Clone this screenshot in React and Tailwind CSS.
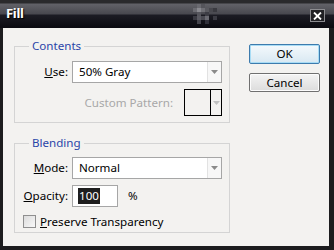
import React from "react";

const font = { fontFamily: '"Noto Sans", "Liberation Sans", sans-serif' };

function Arrow({ color = "#8a8a8a" }) {
  return (
    <svg width="7" height="4" viewBox="0 0 7 4">
      <path d="M0 0 H7 L3.5 4 Z" fill={color} />
    </svg>
  );
}

function Select({ value }) {
  return (
    <div className="flex h-[22px] w-[150px] border border-[#a6a6a6] bg-white">
      <div className="flex flex-1 items-center pl-[6px] text-[11.6px] text-black">{value}</div>
      <div className="flex w-[14px] items-center justify-center border-l border-[#e2e2e2] bg-[#f7f7f7]">
        <Arrow />
      </div>
    </div>
  );
}

function TitlePixels() {
  const sq = [
    [197, 4, "#6a6a70"],
    [201, 4, "#55555b"],
    [193, 8, "#6c6c72"],
    [197, 8, "#8a8a90"],
    [201, 8, "#707076"],
    [205, 8, "#5a5a60"],
    [209, 8, "#48484e"],
    [213, 8, "#3a3a40"],
    [197, 12, "#55555c"],
    [205, 12, "#3c3c44"],
    [193, 16, "#3a3a42"],
    [197, 16, "#5a5a62"],
    [201, 16, "#4a4a52"],
    [205, 16, "#6a6a72"],
    [213, 16, "#3a3a42"],
    [197, 20, "#44444c"],
    [205, 20, "#30303a"],
  ];
  return (
    <svg width="334" height="28" className="absolute left-0 top-0">
      {sq.map(([x, y, c], i) => (
        <rect key={i} x={x} y={y} width="4" height="4" fill={c} />
      ))}
    </svg>
  );
}

export default function App() {
  return (
    <div className="h-[250px] w-[334px] bg-[#1c1c1e] flex flex-col" style={font}>
      <div className="relative h-[28px] shrink-0 bg-[linear-gradient(to_bottom,#2a2a2c_0px,#2a2a2c_3px,#626268_4px,#48484f_14px,#1c1c24_15px,#0c0c12_27px)]">
        <TitlePixels />
        <div className="relative flex h-full items-center justify-between pl-[6px] pr-[9px]">
          <span className="text-[13px] font-bold text-white [text-shadow:1px_1px_1px_#000] tracking-[-0.3px]">Fill</span>
          <div className="flex h-[13px] w-[15px] items-center justify-center border border-[#8c8c90] bg-[#202024] mt-[3px]">
            <svg width="9" height="8" viewBox="0 0 9 8">
              <path d="M1 0.5 L8 7.5 M8 0.5 L1 7.5" stroke="#fff" strokeWidth="1.8" />
            </svg>
          </div>
        </div>
      </div>
      <div className="ml-[3px] mr-[5px] mb-[4px] flex flex-1 bg-[#f3f2f0] pl-[11px] pt-[10px]">
        <div className="flex w-[216px] flex-col gap-[12px]">
          <fieldset className="h-[85px] border border-[#d4d4d4] pl-[14px] pr-[7px] pt-[7px]">
            <legend className="px-[3px] text-[11.6px] leading-[16px] text-[#2a45a8]">Contents</legend>
            <div className="flex flex-col gap-[6px] -ml-[14px]">
              <div className="flex items-center">
                <span className="w-[57px] pr-[4px] text-right text-[11.6px] text-black">
                  <span className="underline">U</span>se:
                </span>
                <Select value="50% Gray" />
              </div>
              <div className="flex items-center">
                <span className="w-[169px] pr-[11px] text-right text-[11.6px] text-[#a8a8a8]">Custom Pattern:</span>
                <div className="flex h-[27px] w-[38px] border border-black bg-[#f3f2f0]">
                  <div className="flex-1 border-r border-black" />
                  <div className="flex w-[10px] items-center justify-center">
                    <Arrow color="#c0c0c0" />
                  </div>
                </div>
              </div>
            </div>
          </fieldset>
          <fieldset className="h-[98px] border border-[#d4d4d4] pl-[14px] pr-[7px] pt-[6px]">
            <legend className="px-[3px] text-[11.6px] leading-[16px] text-[#2a45a8]">Blending</legend>
            <div className="flex flex-col gap-[6px] -ml-[14px]">
              <div className="flex items-center">
                <span className="w-[57px] pr-[4px] text-right text-[11.6px] text-black">
                  <span className="underline">M</span>ode:
                </span>
                <Select value="Normal" />
              </div>
              <div className="flex items-center">
                <span className="w-[57px] pr-[4px] text-right text-[11.6px] text-black">
                  <span className="underline">O</span>pacity:
                </span>
                <div className="flex h-[22px] w-[46px] items-center border border-[#a6a6a6] bg-white pl-[5px]">
                  <span className="bg-[#1e1e1e] px-[1px] text-[11.6px] leading-[16px] text-white">100</span>
                </div>
                <span className="ml-[10px] text-[11.6px] text-black">%</span>
              </div>
              <div className="flex items-center pl-[8px]">
                <div className="h-[13px] w-[13px] border border-[#8f8f8f] bg-[linear-gradient(135deg,#dcdcdc,#f8f8f8)]" />
                <span className="ml-[4px] text-[11.6px] text-black">
                  <span className="underline">P</span>reserve Transparency
                </span>
              </div>
            </div>
          </fieldset>
        </div>
        <div className="ml-[19px] flex flex-col gap-[9px] pt-[6px]">
          <button className="h-[20px] w-[71px] rounded-[2px] border border-[#3d7bad] bg-[linear-gradient(to_bottom,#f4f9fc,#d8e8f2)] text-[11.6px] leading-none text-black shadow-[inset_0_0_0_1px_#a8dcf5]">
            OK
          </button>
          <button className="h-[19px] w-[71px] rounded-[2px] border border-[#707070] bg-[linear-gradient(to_bottom,#f4f4f4,#dcdcdc)] text-[11.6px] leading-none text-black shadow-[inset_0_0_0_1px_#fcfcfc]">
            Cancel
          </button>
        </div>
      </div>
    </div>
  );
}
